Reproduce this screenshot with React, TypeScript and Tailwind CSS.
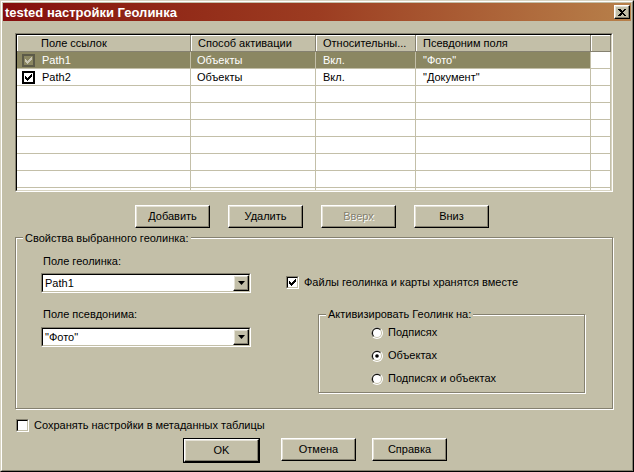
import React from 'react';

type Row = {
  checked: boolean;
  selected: boolean;
  name: string;
  mode: string;
  rel: string;
  alias: string;
};

const rows: Row[] = [
  { checked: true, selected: true, name: 'Path1', mode: 'Объекты', rel: 'Вкл.', alias: '"Фото"' },
  { checked: true, selected: false, name: 'Path2', mode: 'Объекты', rel: 'Вкл.', alias: '"Документ"' },
];

const raised =
  'border border-t-white border-l-white border-r-black border-b-black shadow-[inset_-1px_-1px_0_#858170,inset_1px_1px_0_#e4e1d5]';

const CheckMark = ({ color }: { color: string }) => (
  <svg width="7" height="7" viewBox="0 0 7 7" shapeRendering="crispEdges">
    {[2, 3, 4, 3, 2, 1, 0].map((y, x) => (
      <rect key={x} x={x} y={y} width="1" height="3" fill={color} />
    ))}
  </svg>
);

const SunkenBox = ({ checked }: { checked: boolean }) => (
  <div className="w-[13px] h-[13px] shrink-0 border border-t-[#858170] border-l-[#858170] border-r-white border-b-white">
    <div className="w-full h-full bg-white border border-t-black border-l-black border-r-[#c3bfa8] border-b-[#c3bfa8] flex items-center justify-center">
      {checked && <CheckMark color="#000" />}
    </div>
  </div>
);

const Radio = ({ on }: { on: boolean }) => (
  <svg width="12" height="12" viewBox="0 0 12 12" className="shrink-0">
    <circle cx="6" cy="6" r="6" fill="#ffffff" />
    <path d="M1.76 10.24 A6 6 0 0 1 10.24 1.76 Z" fill="#858170" />
    <circle cx="6" cy="6" r="5" fill="#c3bfa8" />
    <path d="M2.46 9.54 A5 5 0 0 1 9.54 2.46 Z" fill="#000" />
    <circle cx="6" cy="6" r="4" fill="#ffffff" />
    {on && <circle cx="6" cy="6" r="1.8" fill="#000" />}
  </svg>
);

const Button = ({ label, disabled, className = '' }: { label: string; disabled?: boolean; className?: string }) => (
  <div className={`w-[75px] h-[23px] flex items-center justify-center ${raised} ${className}`}>
    <span className={disabled ? 'text-[#858170] [text-shadow:1px_1px_0_#fff]' : ''}>{label}</span>
  </div>
);

const Combo = ({ value }: { value: string }) => (
  <div className="w-[210px] h-[20px] border border-t-[#858170] border-l-[#858170] border-r-white border-b-white">
    <div className="h-full bg-white border border-t-black border-l-black border-r-[#c3bfa8] border-b-[#c3bfa8] flex items-center">
      <span className="flex-1 pl-[2px]">{value}</span>
      <div className={`w-[16px] h-full flex items-center justify-center bg-[#c3bfa8] ${raised}`}>
        <svg width="7" height="4" viewBox="0 0 7 4">
          <path d="M0 0h7L3.5 4z" fill="#000" />
        </svg>
      </div>
    </div>
  </div>
);

const HeadCell = ({ children, className = '' }: { children?: React.ReactNode; className?: string }) => (
  <div
    className={`h-[17px] flex items-center border-r border-b border-r-[#858170] border-b-[#858170] shadow-[inset_1px_1px_0_#fff] ${className}`}
  >
    {children}
  </div>
);

const cell = 'h-[17px] flex items-center border-r border-b border-[#c3bfa8]';

export default function App() {
  const empties = Array.from({ length: 7 });
  return (
    <div className="w-[634px] h-[472px] bg-[#c3bfa8] font-['Liberation_Sans',Arial,sans-serif] text-[11px] leading-[13px] text-black border border-t-[#d8d4c2] border-l-[#d8d4c2] border-r-black border-b-black">
      <div className="h-full p-px border border-t-white border-l-white border-r-[#858170] border-b-[#858170] flex flex-col">
        {/* title */}
        <div className="h-[18px] shrink-0 flex items-center justify-between pl-[2px] pr-[1px] bg-linear-to-r from-[#850d0d] via-[#9c3c21] to-[#b7804a]">
          <span className="text-white font-bold text-[13px]">tested настройки Геолинка</span>
          <div className={`w-[16px] h-[14px] bg-[#c3bfa8] flex items-center justify-center ${raised}`}>
            <svg width="8" height="7" viewBox="0 0 8 7" shapeRendering="crispEdges">
              <path d="M0 0h2l2 2 2-2h2L5 3.5 8 7H6L4 5 2 7H0l3-3.5z" fill="#000" />
            </svg>
          </div>
        </div>

        <div className="flex flex-col pl-[12px]">
          {/* table */}
          <div className="mt-[12px] w-[598px] h-[159px] border border-t-[#858170] border-l-[#858170] border-r-white border-b-white">
            <div className="h-full bg-white overflow-hidden border border-t-black border-l-black border-r-[#d8d4c2] border-b-[#d8d4c2]">
              <div className="flex bg-[#c3bfa8]">
                <HeadCell className="w-[174px] pl-[24px]">Поле ссылок</HeadCell>
                <HeadCell className="w-[125px] pl-[7px]">Способ активации</HeadCell>
                <HeadCell className="w-[100px] pl-[7px]">Относительны...</HeadCell>
                <HeadCell className="w-[175px] pl-[7px]">Псевдоним поля</HeadCell>
                <HeadCell className="flex-1" />
              </div>
              {rows.map((r) => (
                <div key={r.name} className="flex">
                  <div className={`${cell} w-[174px] pl-[5px] gap-[7px] ${r.selected ? 'bg-[#8b8762] text-white' : ''}`}>
                    {r.selected ? (
                      <div className="w-[13px] h-[13px] shrink-0 border-2 border-[#5c5a48] bg-[#8b8762] flex items-center justify-center">
                        <CheckMark color="#c9c6b4" />
                      </div>
                    ) : (
                      <div className="w-[13px] h-[13px] shrink-0 border-2 border-black bg-white flex items-center justify-center">
                        <CheckMark color="#000" />
                      </div>
                    )}
                    <span>{r.name}</span>
                  </div>
                  <div className={`${cell} w-[125px] pl-[6px] ${r.selected ? 'bg-[#8b8762] text-white' : ''}`}>{r.mode}</div>
                  <div className={`${cell} w-[100px] pl-[7px] ${r.selected ? 'bg-[#8b8762] text-white' : ''}`}>{r.rel}</div>
                  <div className={`${cell} w-[175px] pl-[7px] ${r.selected ? 'bg-[#8b8762] text-white' : ''}`}>{r.alias}</div>
                  <div className={`${cell} flex-1`} />
                </div>
              ))}
              {empties.map((_, i) => (
                <div key={i} className="flex">
                  <div className={`${cell} w-[174px]`} />
                  <div className={`${cell} w-[125px]`} />
                  <div className={`${cell} w-[100px]`} />
                  <div className={`${cell} w-[175px]`} />
                  <div className={`${cell} flex-1`} />
                </div>
              ))}
            </div>
          </div>

          {/* row buttons */}
          <div className="mt-[13px] ml-[120px] flex gap-[18px]">
            <Button label="Добавить" />
            <Button label="Удалить" />
            <Button label="Вверх" disabled />
            <Button label="Вниз" />
          </div>

          {/* properties group */}
          <div className="relative mt-[9px] w-[598px] h-[172px] border border-[#858170] shadow-[inset_1px_1px_0_#fff,1px_1px_0_#fff]">
            <span className="absolute -top-[6px] left-[7px] px-[2px] bg-[#c3bfa8]">Свойства выбранного геолинка:</span>
            <div className="flex">
              <div className="pl-[25px] pt-[17px] flex flex-col">
                <span className="ml-[2px]">Поле геолинка:</span>
                <div className="mt-[5px]">
                  <Combo value="Path1" />
                </div>
                <span className="ml-[2px] mt-[15px]">Поле псевдонима:</span>
                <div className="mt-[6px]">
                  <Combo value={'"Фото"'} />
                </div>
              </div>
              <div className="ml-[35px] pt-[38px] flex flex-col">
                <div className="flex items-center gap-[5px]">
                  <SunkenBox checked />
                  <span>Файлы геолинка и карты хранятся вместе</span>
                </div>
                <div className="relative mt-[25px] ml-[32px] w-[267px] h-[79px] border border-[#858170] shadow-[inset_1px_1px_0_#fff,1px_1px_0_#fff]">
                  <span className="absolute -top-[7px] left-[7px] px-[2px] bg-[#c3bfa8]">Активизировать Геолинк на:</span>
                  <div className="pl-[52px] pt-[11px] flex flex-col gap-[10px]">
                    <div className="flex items-center gap-[5px] h-[13px]">
                      <Radio on={false} />
                      <span>Подписях</span>
                    </div>
                    <div className="flex items-center gap-[5px] h-[13px]">
                      <Radio on />
                      <span>Объектах</span>
                    </div>
                    <div className="flex items-center gap-[5px] h-[13px]">
                      <Radio on={false} />
                      <span>Подписях и объектах</span>
                    </div>
                  </div>
                </div>
              </div>
            </div>
          </div>

          {/* metadata checkbox */}
          <div className="mt-[10px] ml-px flex items-center gap-[5px]">
            <SunkenBox checked={false} />
            <span>Сохранять настройки в метаданных таблицы</span>
          </div>

          {/* dialog buttons */}
          <div className="mt-[6px] flex">
            <div className="ml-[168px] border border-black">
              <Button label="OK" className="w-[73px] h-[21px]" />
            </div>
            <Button label="Отмена" className="ml-[21px]" />
            <Button label="Справка" className="ml-[16px]" />
          </div>
        </div>
      </div>
    </div>
  );
}
